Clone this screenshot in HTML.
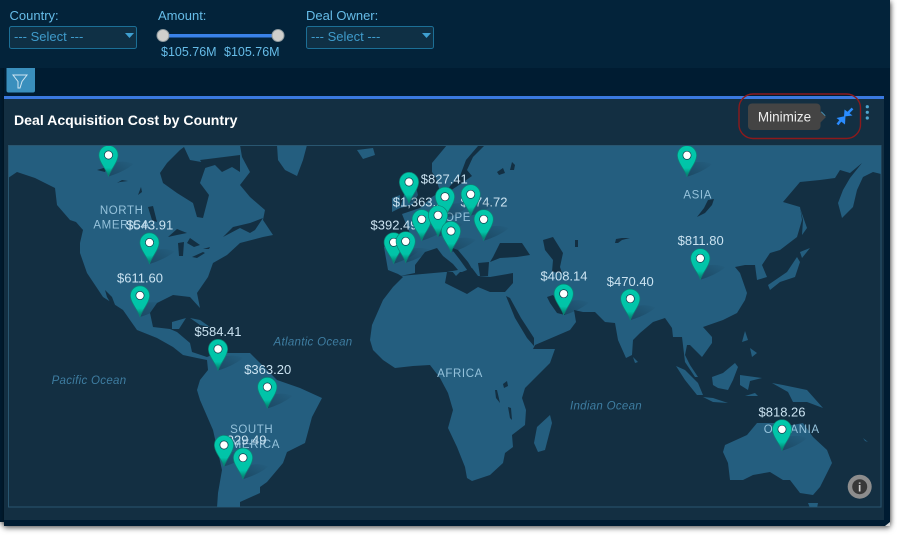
<!DOCTYPE html>
<html><head><meta charset="utf-8"><style>
html,body{margin:0;padding:0;background:#fff;width:900px;height:536px;overflow:hidden}
svg{display:block}
text{font-family:"Liberation Sans",sans-serif}
.o{fill:#132f42}
.l{fill:#245e7f}
.v{font-size:13px;fill:#cbe3f1;text-anchor:middle}
.c{font-size:11.5px;fill:#95c2db;text-anchor:middle;letter-spacing:.6px}
.s{font-size:11.5px;fill:#3e7da1;text-anchor:middle;font-style:italic;letter-spacing:.3px}
.f{font-size:13px;fill:#66bce8}
</style></head><body>
<svg width="900" height="536" viewBox="0 0 900 536" xmlns="http://www.w3.org/2000/svg">
<defs>
<filter id="sh" x="-5%" y="-5%" width="110%" height="110%"><feDropShadow dx="0" dy="2" stdDeviation="3" flood-color="#000" flood-opacity=".55"/></filter>
<clipPath id="mc"><rect x="9" y="146" width="872" height="361"/></clipPath>
<linearGradient id="ps" x1="0" y1="1" x2="1" y2="0"><stop offset="0" stop-color="#0f2a3c" stop-opacity=".4"/><stop offset="1" stop-color="#0f2a3c" stop-opacity="0"/></linearGradient>
<linearGradient id="pb" x1="0" y1="0" x2="0" y2="1"><stop offset="0" stop-color="#01c8ab"/><stop offset=".72" stop-color="#01c3a8"/><stop offset="1" stop-color="#046f5f"/></linearGradient>
<g id="pin">
<path d="M0,21.5 L8,7 C15,6 22,7 25,9 C18,15 8,19 0,21.5Z" fill="url(#ps)"/>
<path d="M0,21.5 C-1,16 -9.600,7.500 -9.600,0 A9.600,9.600 0 0 1 9.600,0 C9.600,7.500 1,16 0,21.5Z" fill="url(#pb)" stroke="#0a8576" stroke-width=".7"/>
<circle r="4.100" fill="#fff" stroke="#14394a" stroke-width=".7"/>
</g>
</defs>
<rect x="0" y="0" width="890" height="522" fill="#001d32" filter="url(#sh)"/>
<rect x="4" y="0" width="886" height="526" fill="#001d32" filter="url(#sh)"/>
<rect x="0" y="0" width="890" height="68" fill="#03233a"/>
<rect x="4" y="96" width="880" height="424" fill="#132f42"/>
<rect x="4" y="96" width="880" height="3" fill="#3a79e0"/>

<text x="9.5" y="20" class="f">Country:</text>
<rect x="9.5" y="26.5" width="127" height="22" rx="2" fill="#0f3045" stroke="#1c6f96"/>
<text x="14" y="41" font-size="13" fill="#3f9bcb">--- Select ---</text>
<path d="M125,33H134L129.500,38Z" fill="#3f9fd0"/>

<text x="158" y="20" class="f">Amount:</text>
<rect x="163" y="34" width="115" height="3.500" fill="#3a82e8"/>
<circle cx="163" cy="35.500" r="6" fill="#cfcfcc" stroke="#8f9a9f"/>
<circle cx="278" cy="35.500" r="6" fill="#cfcfcc" stroke="#8f9a9f"/>
<text x="161" y="56" font-size="12.500" fill="#66bce8">$105.76M</text>
<text x="224" y="56" font-size="12.500" fill="#66bce8">$105.76M</text>

<text x="306" y="20" class="f">Deal Owner:</text>
<rect x="306.500" y="26.500" width="127" height="22" rx="2" fill="#0f3045" stroke="#1c6f96"/>
<text x="311" y="41" font-size="13" fill="#3f9bcb">--- Select ---</text>
<path d="M422,33H431L426.500,38Z" fill="#3f9fd0"/>

<path d="M6.500,68H35V90.500a2,2 0 0 1-2,2H8.500a2,2 0 0 1-2-2Z" fill="#3a8fbd"/>
<path d="M13,75H27L22,81.500L20,88H18L18,81.500Z" fill="none" stroke="#cfe6f2" stroke-width="1"/>

<text x="14" y="125" font-size="14.100" font-weight="700" fill="#fff">Deal Acquisition Cost by Country</text>

<rect x="8.500" y="145.500" width="872.500" height="361.500" fill="#132f42" stroke="#295670"/>
<g clip-path="url(#mc)">
<!-- North + Central + South America -->
<polygon class="l" points="8,145 240,145 242,157 250,172 240,185 250,197 265,210 263,220 273,235 263,237 240,243 227,255 213,263 208,277 197,293 200,308 190,297 173,295 157,303 150,313 153,327 170,329 177,332 190,343 192,352 207,357 217,353 250,353 277,380 300,388 322,398 312,417 305,443 287,452 283,463 267,482 260,487 260,493 240,502 240,508 217,508 218,493 222,470 213,430 200,400 197,390 200,380 208,370 207,360 197,358 183,355 173,347 157,338 137,330 123,310 103,297 87,273 80,253 80,243 83,230 70,220 57,205 55,188 35,178 17,172 8,178"/>
<polygon class="l" points="172,322 186,318 179,329 172,329"/>
<polygon class="l" points="190,318 200,320 210,327 200,325"/>
<polygon class="o" points="160,173 167,163 180,150 184,147 190,160 207,163 200,183 209,195 203,218 197,217 193,203 177,193 163,183"/>
<polygon class="o" points="200,160 240,155 240,172 232,167 222,172 215,165 205,168"/>
<polygon class="o" points="223,237 233,227 250,223 263,218 255,230 250,233 240,228"/>
<polygon class="o" points="105,290 112,297 117,310 113,307 107,297"/>
<polygon class="o" points="168,237 177,229 187,233 177,235"/>
<polygon class="o" points="178,243 184,242 183,256 179,256"/>
<polygon class="o" points="190,238 200,245 194,247 187,243"/>
<polygon class="o" points="192,257 203,252 205,253 197,258"/>
<polygon class="o" points="203,249 210,247 209,249"/>
<polygon class="o" points="97,170 107,167 105,172"/>
<polygon class="o" points="117,183 122,180 128,181 120,182"/>
<polygon class="o" points="138,195 141,187 142,192"/>
<polygon class="o" points="148,207 153,206 157,222 152,220"/>
<polygon class="o" points="70,220 76,222 83,230 80,232"/>
<polygon class="l" points="277,145 307,145 303,160 297,176 285,170 278,160"/>
<polygon class="l" points="357,150 373,148 375,155 363,159"/>
<!-- Eurasia + Africa -->
<polygon class="l" points="447,145 881,145 881,174 873,172 863,177 857,190 853,207 842,218 838,203 843,190 850,178 862,163 850,173 840,170 835,178 820,180 800,182 783,202 800,207 802,220 797,237 780,250 770,253 762,265 767,277 757,280 755,265 745,265 735,267 740,273 747,293 745,300 737,313 723,320 703,327 712,337 712,343 702,357 690,345 687,345 685,355 690,365 698,377 695,377 685,362 682,337 673,337 672,328 665,318 653,322 640,333 633,340 632,355 626,358 618,340 615,323 605,322 595,312 583,312 574,310 576,322 570,330 535,345 533,349 555,349 550,363 540,373 525,388 522,398 526,410 525,425 512,435 513,447 505,453 503,463 490,475 472,481 467,478 465,467 457,447 448,428 453,410 448,393 440,378 430,365 413,366 395,368 383,360 373,350 370,340 372,325 383,300 393,287 403,277 398,274 388,270 384,247 400,238 412,238 406,224 402,214 420,208 432,197 440,192 436,178 432,172 432,163"/>
<polygon class="l" points="405,175 412,172 418,195 412,205 400,208 404,195"/>
<polygon class="l" points="392,198 400,195 400,208 392,212"/>
<!-- seas -->
<polygon class="o" points="447,193 462,183 472,176 467,170 473,157 484,146 478,146 466,160 460,176 450,186"/>
<polygon class="o" points="400,276 415,273 415,265 425,252 437,248 443,256 453,264 458,270 447,272 445,283 467,294 478,287 490,292 505,292 513,283 513,273 490,277 478,276 472,268 462,272 445,272"/>
<polygon class="o" points="450,247 458,250 468,262 474,272 470,274 460,260"/>
<polygon class="o" points="478,263 489,262 488,276 480,276"/>
<polygon class="o" points="493,257 500,243 522,243 530,255 517,257 500,258 490,262"/>
<polygon class="o" points="543,240 553,237 563,253 560,267 562,273 552,272 553,260 545,250"/>
<polygon class="o" points="575,240 578,240 578,247 575,247"/>
<polygon class="o" points="506,296 510,298 521,318 534,338 534,346 527,338 515,318"/>
<polygon class="o" points="547,297 553,295 563,308 565,315 557,313 550,303"/>
<polygon class="o" points="697,217 705,213 712,205 714,199 708,200 704,208"/>
<polygon class="o" points="615,243 616,239 622,238 630,238 622,240 618,243"/>
<polygon class="o" points="497,172 503,168 505,173 499,175"/>
<polygon class="o" points="510,170 512,162 515,165 514,170"/>
<polygon class="o" points="503,384 507,381 508,386 504,388"/>
<polygon class="o" points="495,390 497,390 500,403 496,398"/>
<polygon class="o" points="508,407 511,408 512,420 510,418"/>
<polygon class="l" points="452,271 460,272 456,276"/>
<!-- islands -->
<polygon class="l" points="550,415 552,423 545,450 538,452 534,443 537,427"/>
<polygon class="l" points="633,357 638,362 635,363"/>
<polygon class="l" points="676,366 685,370 698,383 703,395 697,395 685,380"/>
<polygon class="l" points="703,397 713,398 728,403 713,402"/>
<polygon class="l" points="712,377 723,373 735,363 738,367 733,380 728,390 718,388 713,385"/>
<polygon class="l" points="740,375 762,378 750,381 748,390 740,385"/>
<polygon class="l" points="745,331 748,340 742,342"/>
<polygon class="l" points="750,348 757,353 752,357"/>
<polygon class="l" points="745,396 755,393 758,396"/>
<polygon class="l" points="772,383 783,385 807,390 823,408 807,402 793,402 788,392"/>
<polygon class="l" points="725,445 747,435 757,423 775,423 782,427 803,423 813,437 827,450 832,463 820,487 813,495 800,493 790,480 783,480 770,472 753,475 743,480 730,480 728,463 723,452"/>
<polygon class="l" points="808,503 818,503 817,508 810,508"/>
<polygon class="l" points="863,438 868,442 865,441"/>
<polygon class="l" points="800,208 807,228 802,235 803,220"/>
<polygon class="l" points="800,252 810,248 802,258"/>
<polygon class="l" points="797,257 800,262 795,277 780,282 770,290 768,285 787,272"/>
<!-- continent and ocean labels -->
<text class="c" x="121.700" y="214">NORTH</text>
<text class="c" x="121.700" y="228.500">AMERICA</text>
<text class="c" x="251.700" y="433">SOUTH</text>
<text class="c" x="251.700" y="448">AMERICA</text>
<text class="c" x="445" y="221">EUROPE</text>
<text class="c" x="697.700" y="198.500">ASIA</text>
<text class="c" x="460" y="377">AFRICA</text>
<text class="c" x="791.700" y="433">OCEANIA</text>
<text class="s" x="313" y="345.500">Atlantic Ocean</text>
<text class="s" x="89" y="384">Pacific Ocean</text>
<text class="s" x="606" y="409.500">Indian Ocean</text>
<!-- value labels -->
<text class="v" x="149.700" y="229.500">$543.91</text>
<text class="v" x="140" y="282.500">$611.60</text>
<text class="v" x="218" y="336">$584.41</text>
<text class="v" x="267.700" y="373.800">$363.20</text>
<text class="v" x="243" y="444.500">$329.49</text>
<text class="v" x="444.300" y="183.500">$827.41</text>
<text class="v" x="421.700" y="206.500">$1,363.29</text>
<text class="v" x="484" y="206.500">$774.72</text>
<text class="v" x="394" y="229.500">$392.49</text>
<text class="v" x="564" y="280.500">$408.14</text>
<text class="v" x="630.300" y="285.800">$470.40</text>
<text class="v" x="700.700" y="245.200">$811.80</text>
<text class="v" x="782" y="416.500">$818.26</text>
<!-- pins -->
<use href="#pin" x="108.500" y="155"/>
<use href="#pin" x="149.500" y="242.500"/>
<use href="#pin" x="140" y="295.500"/>
<use href="#pin" x="218" y="349"/>
<use href="#pin" x="267.300" y="387"/>
<use href="#pin" x="224" y="445"/>
<use href="#pin" x="243" y="457.700"/>
<use href="#pin" x="409" y="182"/>
<use href="#pin" x="470.700" y="194.300"/>
<use href="#pin" x="445" y="196.700"/>
<use href="#pin" x="421.700" y="219.300"/>
<use href="#pin" x="483.700" y="219.300"/>
<use href="#pin" x="438" y="215.300"/>
<use href="#pin" x="451" y="231"/>
<use href="#pin" x="393.700" y="242.300"/>
<use href="#pin" x="405.700" y="241.300"/>
<use href="#pin" x="563.700" y="293.700"/>
<use href="#pin" x="630.300" y="298.700"/>
<use href="#pin" x="687" y="155.300"/>
<use href="#pin" x="700.300" y="258.300"/>
<use href="#pin" x="782" y="429.300"/>
</g>

<!-- info -->
<circle cx="859.700" cy="486.700" r="12" fill="#8d8d8d"/>
<circle cx="859.700" cy="486.700" r="7.500" fill="#383838"/>
<text x="859.700" y="491.500" font-size="12" font-weight="700" fill="#cfcfcf" text-anchor="middle">i</text>

<!-- tooltip and toolbar -->
<path d="M821,112L825,116" stroke="#4fa6cf" stroke-width="1.500"/>
<rect x="748" y="103.500" width="72.500" height="26.500" rx="4" fill="#444"/>
<path d="M820,111L826,117L820,123Z" fill="#444"/>
<text x="784.500" y="121.500" font-size="13.500" fill="#eee" text-anchor="middle">Minimize</text>
<path d="M844.500,109.500L852.500,115.500L844,116.500Z" fill="#2a8cff"/>
<path d="M848,113L852.500,108.500" stroke="#2a8cff" stroke-width="2.500"/>
<path d="M836.500,118L845,124.500L845.500,116Z" fill="#2a8cff"/>
<path d="M841,120L837.500,124.500" stroke="#2a8cff" stroke-width="2.500"/>
<circle cx="867.300" cy="106.700" r="1.600" fill="#4fa6cf"/>
<circle cx="867.300" cy="112.300" r="1.600" fill="#4fa6cf"/>
<circle cx="867.300" cy="118" r="1.600" fill="#4fa6cf"/>
<rect x="739" y="94" width="121.500" height="44.500" rx="14" fill="none" stroke="#8c1a1c" stroke-width="1.400"/>
<path d="M885,526L890,522V526Z" fill="#d8d8d8"/>
</svg>
</body></html>
